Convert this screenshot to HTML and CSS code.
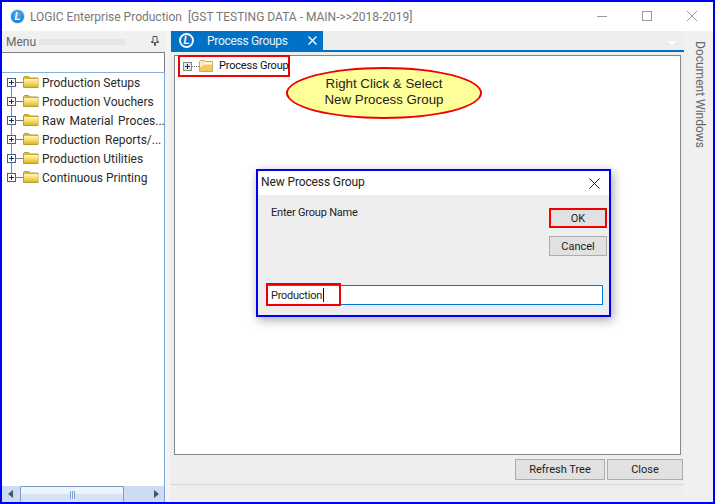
FILE: index.html
```html
<!DOCTYPE html>
<html lang="en">
<head>
<meta charset="utf-8">
<title>LOGIC Enterprise Production</title>
<link rel="stylesheet" href="styles.css">
</head>
<body>
<svg class="defs" width="0" height="0" aria-hidden="true">
  <defs>
    <linearGradient id="folder-body" x1="0" y1="0" x2="0" y2="1">
      <stop offset="0" stop-color="#fff7b8"/>
      <stop offset=".45" stop-color="#f6e070"/>
      <stop offset="1" stop-color="#dcb820"/>
    </linearGradient>
  </defs>
  <symbol id="folder" viewBox="0 0 16 12">
    <path d="M.5 1.5l1-1h4l1.500 1.500h8v9.500h-14.500z" fill="#d8b830" stroke="#b89c38"/>
    <rect x="1" y="3" width="14" height="8" fill="url(#folder-body)"/>
  </symbol>
  <symbol id="folder-open" viewBox="0 0 14 12">
    <path d="M.5 1.500l1-1h4l1 1h7v10h-13z" fill="#fde9bc" stroke="#c8a868"/>
    <rect x="6" y="3" width="7" height="1.500" fill="#fff"/>
    <path d="M6 4.500h7v6.500h-12v-3.500z" fill="#f8c860"/>
  </symbol>
  <symbol id="plus" viewBox="0 0 9 9">
    <rect x=".5" y=".5" width="8" height="8" fill="#fff" stroke="#41608f"/>
    <path d="M2 4.500h5M4.500 2v5" stroke="#1c2c50"/>
  </symbol>
  <symbol id="plus-grey" viewBox="0 0 9 9">
    <rect x=".5" y=".5" width="8" height="8" fill="#e6e6e6" stroke="#8a8a8a"/>
    <path d="M2 4.500h5M4.500 2v5" stroke="#1c2c50"/>
  </symbol>
</svg>

<div class="app">
  <header class="titlebar">
    <span class="logo logo-title"><span class="logo-letter">L</span></span>
    <span class="app-title">LOGIC Enterprise Production&nbsp; [GST TESTING DATA - MAIN-&gt;&gt;2018-2019]</span>
    <div class="win-controls">
      <svg class="win-btn" viewBox="0 0 10 10"><path d="M0 5.500h10" stroke="#999"/></svg>
      <svg class="win-btn" viewBox="0 0 10 10"><rect x=".5" y=".5" width="9" height="9" fill="none" stroke="#999"/></svg>
      <svg class="win-btn" viewBox="0 0 10 10"><path d="M0 0l10 10M10 0l-10 10" stroke="#999" fill="none"/></svg>
    </div>
  </header>

  <div class="workspace">
    <aside class="sidebar">
      <div class="side-head">
        <span class="side-title">Menu</span>
        <span class="grip"></span>
        <svg class="pin" viewBox="0 0 8 10"><path d="M2 .5h4v5h1.500v1h-3v3h-1v-3h-3v-1H2z" fill="none" stroke="#555"/></svg>
      </div>
      <div class="side-search"></div>
      <ul class="tree">
        <li class="tree-row"><svg class="plus"><use href="#plus"/></svg><span class="hline"></span><svg class="folder"><use href="#folder"/></svg><span>Production Setups</span></li>
        <li class="tree-row"><svg class="plus"><use href="#plus"/></svg><span class="hline"></span><svg class="folder"><use href="#folder"/></svg><span>Production Vouchers</span></li>
        <li class="tree-row"><svg class="plus"><use href="#plus"/></svg><span class="hline"></span><svg class="folder"><use href="#folder"/></svg><span class="wide">Raw Material Proces...</span></li>
        <li class="tree-row"><svg class="plus"><use href="#plus"/></svg><span class="hline"></span><svg class="folder"><use href="#folder"/></svg><span class="wide">Production Reports/...</span></li>
        <li class="tree-row"><svg class="plus"><use href="#plus"/></svg><span class="hline"></span><svg class="folder"><use href="#folder"/></svg><span>Production Utilities</span></li>
        <li class="tree-row last"><svg class="plus"><use href="#plus"/></svg><span class="hline"></span><svg class="folder"><use href="#folder"/></svg><span>Continuous Printing</span></li>
      </ul>
      <div class="scrollbar">
        <span class="arrow arrow-left"></span>
        <div class="thumb"><span class="thumb-grip"></span></div>
        <span class="arrow arrow-right"></span>
      </div>
    </aside>

    <main class="main">
      <div class="tabstrip">
        <div class="tab">
          <span class="logo logo-tab"><span class="logo-letter">L</span></span>
          <span class="tab-title">Process Groups</span>
          <svg class="tab-close" viewBox="0 0 9 9"><path d="M.5.5l8 8M8.500.5l-8 8" stroke="#fff" stroke-width="1.300" fill="none"/></svg>
        </div>
        <span class="tab-menu"></span>
      </div>
      <div class="content">
        <div class="root-node">
          <svg class="plus"><use href="#plus-grey"/></svg>
          <span class="dots"></span>
          <svg class="folder-open"><use href="#folder-open"/></svg>
          <span class="root-label">Process Group</span>
        </div>
      </div>
      <div class="actions">
        <button class="btn btn-refresh" type="button">Refresh Tree</button>
        <button class="btn btn-close" type="button">Close</button>
      </div>
      <div class="footer"></div>
    </main>

    <div class="doc-strip"><span class="doc-label">Document Windows</span></div>
  </div>

  <div class="callout">Right Click &amp; Select<br>New Process Group</div>

  <section class="dialog">
    <div class="dlg-title">
      <span class="dlg-heading">New Process Group</span>
      <svg class="dlg-x" viewBox="0 0 11 11"><path d="M.5.5l10 10M10.500.5l-10 10" stroke="#222" fill="none"/></svg>
    </div>
    <div class="dlg-body">
      <div class="dlg-top">
        <span class="dlg-label">Enter Group Name</span>
        <div class="dlg-buttons">
          <button class="btn dlg-btn dlg-ok" type="button">OK</button>
          <button class="btn dlg-btn" type="button">Cancel</button>
        </div>
      </div>
      <div class="dlg-input"><span class="dlg-value">Production</span><span class="caret"></span></div>
    </div>
  </section>
</div>
</body>
</html>
```

FILE: styles.css
```css
*, *::before, *::after { box-sizing: border-box; }
html, body { margin: 0; padding: 0; }
body {
  width: 715px;
  height: 504px;
  overflow: hidden;
  font-family: Roboto, "Liberation Sans", Arial, sans-serif;
  font-size: 12px;
  color: #222;
}
.defs { position: absolute; }

.logo {
  width: 15px;
  height: 15px;
  flex: none;
  border-radius: 50%;
  display: flex;
  align-items: center;
  justify-content: center;
  background: radial-gradient(circle at 50% 35%, #5fb0ee 0, #1a7fd6 70%);
  border: 1px solid #cfe6fa;
}
.logo-tab { border: 2px solid #f2f8fd; background: #0f6fc4; margin-right: 13px; }
.logo-title { margin-right: 5px; }
.logo-letter {
  font: italic bold 10px/1 "Liberation Sans", Arial, sans-serif;
  color: #fff;
}

.app {
  position: relative;
  width: 715px;
  height: 504px;
  border: 2px solid #0000f0;
  background: #eee;
  display: flex;
  flex-direction: column;
}

.titlebar {
  height: 29px;
  flex: none;
  background: #fff;
  display: flex;
  align-items: center;
  padding-left: 8px;
}
.app-title { color: #777; font-size: 12px; white-space: pre; }
.win-controls {
  margin-left: auto;
  display: flex;
  gap: 35px;
  padding-right: 16px;
  margin-top: -1px;
}
.win-btn { width: 10px; height: 10px; display: block; }

.workspace { flex: 1; display: flex; min-height: 0; }

.sidebar {
  width: 163px;
  flex: none;
  display: flex;
  flex-direction: column;
}
.side-head {
  height: 21px;
  flex: none;
  display: flex;
  align-items: center;
  padding: 0 5px 0 4px;
  background: #f0f0f0;
}
.side-title { color: #666; font-size: 12px; }
.grip {
  width: 86px;
  height: 6px;
  margin-left: 3px;
  background: conic-gradient(#dcdcdc 25%, #f0f0f0 0 50%, #dcdcdc 0 75%, #f0f0f0 0) 0 0 / 2px 2px;
}
.pin { width: 8px; height: 10px; margin-left: auto; margin-right: 1px; margin-top: -2px; }
.side-search {
  height: 20px;
  flex: none;
  background: #fff;
  border-top: 1px solid #808080;
  border-right: 1px solid #808080;
}
.tree {
  flex: 1;
  margin: 0;
  padding: 0 0 0 5px;
  list-style: none;
  background: #fff;
  border-top: 1px solid #8ab0dc;
  border-right: 1px solid #7fa6d8;
}
.tree-row {
  position: relative;
  height: 19px;
  display: flex;
  align-items: center;
  color: #2a2a2a;
  white-space: nowrap;
}
.tree-row::after {
  content: "";
  position: absolute;
  left: 4px;
  top: 14px;
  height: 10px;
  border-left: 1px solid #888;
}
.tree-row.last::after { display: none; }
.plus { width: 9px; height: 9px; flex: none; position: relative; z-index: 1; }
.hline { width: 7px; border-top: 1px solid #777; flex: none; }
.folder { width: 16px; height: 12px; flex: none; margin-right: 3px; margin-top: -1px; }
.wide { word-spacing: 1.7px; }

.scrollbar {
  height: 16px;
  flex: none;
  background: #cddcf3;
  border-right: 1px solid #7fa6d8;
  display: flex;
  align-items: center;
  padding-left: 6px;
}
.arrow { width: 0; height: 0; border-top: 4px solid transparent; border-bottom: 4px solid transparent; }
.arrow-left { border-right: 5px solid #44546e; }
.arrow-right { border-left: 5px solid #44546e; margin-left: 30px; }
.thumb {
  width: 104px;
  height: 16px;
  margin-left: 7px;
  border: 1px solid #7b9cc4;
  border-bottom: 0;
  border-radius: 2px 2px 0 0;
  background: linear-gradient(#eef4fc 0 45%, #d6e3f6 45% 100%);
  display: flex;
  justify-content: center;
  align-items: center;
}
.thumb-grip {
  width: 5px;
  height: 8px;
  background: repeating-linear-gradient(90deg, #7f9fcc 0 1px, #eef4fc 1px 2px);
}

.main {
  width: 519px;
  flex: none;
  padding-left: 6px;
  display: flex;
  flex-direction: column;
  background: linear-gradient(90deg, #f4f4f4 0 5px, #eee 5px);
}
.tabstrip {
  height: 21px;
  flex: none;
  display: flex;
  border-bottom: 2px solid #0072c6;
  position: relative;
}
.tab {
  width: 152px;
  height: 19px;
  background: #0072c6;
  display: flex;
  align-items: center;
  padding-left: 8px;
  color: #e8f2fb;
}
.tab-title { font-size: 12px; letter-spacing: -.3px; }
.tab-close { width: 9px; height: 9px; margin-left: auto; margin-right: 6px; }
.tab-menu {
  margin-left: auto;
  margin-right: 7px;
  margin-top: 10px;
  width: 0;
  height: 0;
  border-left: 5px solid transparent;
  border-right: 5px solid transparent;
  border-top: 4px solid #fff;
}

.content {
  position: relative;
  height: 400px;
  flex: none;
  margin: 3px 3px 0 3px;
  background: #fff;
  border: 1px solid #808890;
}
.root-node {
  position: absolute;
  left: 3px;
  top: -1px;
  width: 112px;
  height: 22px;
  border: 2px solid #f00000;
  display: flex;
  align-items: center;
  padding-left: 3px;
  color: #111;
}
.dots { width: 7px; border-top: 1px dotted #777; flex: none; }
.folder-open { width: 14px; height: 12px; flex: none; margin-right: 6px; }
.root-label { white-space: nowrap; font-size: 11px; letter-spacing: -.2px; margin-top: -2px; }

.actions {
  display: flex;
  justify-content: flex-end;
  gap: 2px;
  margin-top: 4px;
  height: 21px;
  flex: none;
  padding-right: 1px;
}
.btn {
  font: 11px Roboto, "Liberation Sans", Arial, sans-serif;
  color: #222;
  background: #e1e1e1;
  border: 1px solid #adadad;
  padding: 0;
}
.btn-refresh { width: 90px; }
.btn-close { width: 76px; }
.footer {
  margin-top: 4px;
  margin-right: 1px;
  border-top: 1px solid #d4d4d4;
}

.doc-strip {
  flex: 1;
  background: #f0f0f0;
  display: flex;
  align-items: flex-start;
  justify-content: center;
  padding: 10px 0 0 2px;
}
.doc-label {
  writing-mode: vertical-rl;
  color: #666;
  font-size: 12px;
  white-space: nowrap;
}

.callout {
  position: absolute;
  left: 284px;
  top: 65px;
  width: 196px;
  height: 52px;
  border: 2px solid #ee0000;
  border-radius: 50%;
  background: #ffff99;
  color: #222;
  font-family: "Liberation Sans", Arial, sans-serif;
  font-size: 13.300px;
  line-height: 16px;
  text-align: center;
  padding-top: 7px;
}

.dialog {
  position: absolute;
  left: 254px;
  top: 167px;
  width: 355px;
  height: 148px;
  border: 2px solid #0000f0;
  background: #eee;
  display: flex;
  flex-direction: column;
  box-shadow: 2px 3px 10px rgba(0,0,0,.35);
}
.dlg-title {
  height: 24px;
  flex: none;
  background: #fff;
  display: flex;
  align-items: center;
  padding: 0 9px 2px 3px;
  color: #222;
}
.dlg-heading { letter-spacing: -.12px; }
.dlg-x { width: 11px; height: 11px; margin-left: auto; margin-top: 2px; }
.dlg-body {
  flex: 1;
  display: flex;
  flex-direction: column;
  padding: 0 2px 0 9px;
}
.dlg-top {
  height: 90px;
  flex: none;
  display: flex;
  justify-content: space-between;
  align-items: flex-start;
}
.dlg-label { margin: 11px 0 0 4px; font-size: 11px; letter-spacing: -.2px; }
.dlg-buttons {
  display: flex;
  flex-direction: column;
  gap: 8px;
  margin-top: 13px;
}
.dlg-btn { width: 58px; height: 20px; }
.dlg-ok { border: 2px solid #f00000; }
.dlg-input {
  position: relative;
  height: 20px;
  width: 336px;
  background: #fff;
  border: 1px solid #0078d7;
  display: flex;
  align-items: center;
  padding-left: 3px;
}
.dlg-input::after {
  content: "";
  position: absolute;
  left: -2px;
  top: -3px;
  width: 75px;
  height: 23px;
  border: 2px solid #f00000;
}
.dlg-value { font-size: 11px; letter-spacing: -.25px; }
.caret { width: 1px; height: 14px; background: #111; margin-left: 1px; }
```
